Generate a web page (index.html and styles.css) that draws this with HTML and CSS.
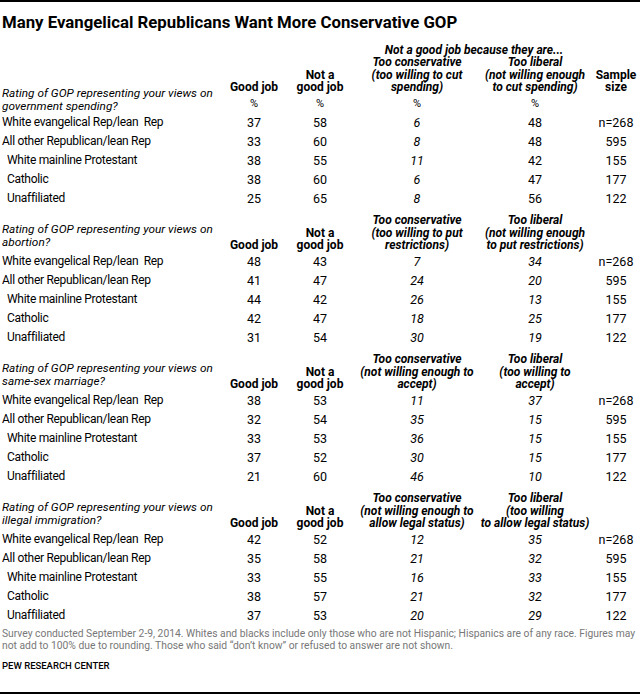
FILE: index.html
```html
<!DOCTYPE html>
<html>
<head>
<meta charset="utf-8">
<link rel="stylesheet" href="styles.css">
</head>
<body>
<div class="page">
  <h1 class="title">Many Evangelical Republicans Want More Conservative GOP</h1>

  <div class="section first">
    <div class="q">Rating of GOP representing your views on<br>government spending?</div>
    <div class="super">Not a good job because they are...</div>
    <div class="h c2">Good job</div>
    <div class="h c3">Not a<br>good job</div>
    <div class="h c4 it">Too conservative<br>(too willing to cut<br>spending)</div>
    <div class="h c5 it">Too liberal<br>(not willing enough<br>to cut spending)</div>
    <div class="h c6">Sample<br>size</div>
    <div class="pct c2">%</div><div class="pct c3">%</div><div class="pct c4">%</div><div class="pct c5">%</div>

    <div class="lab">White evangelical Rep/lean&nbsp; Rep</div><div class="n">37</div><div class="n">58</div><div class="n i">6</div><div class="n">48</div><div class="n">n=268</div>
    <div class="lab">All other Republican/lean Rep</div><div class="n">33</div><div class="n">60</div><div class="n i">8</div><div class="n">48</div><div class="n">595</div>
    <div class="lab ind">White mainline Protestant</div><div class="n">38</div><div class="n">55</div><div class="n i">11</div><div class="n">42</div><div class="n">155</div>
    <div class="lab ind">Catholic</div><div class="n">38</div><div class="n">60</div><div class="n i">6</div><div class="n">47</div><div class="n">177</div>
    <div class="lab ind">Unaffiliated</div><div class="n">25</div><div class="n">65</div><div class="n i">8</div><div class="n">56</div><div class="n">122</div>
  </div>

  <div class="section">
    <div class="q">Rating of GOP representing your views on<br>abortion?</div>
    <div class="h c2">Good job</div>
    <div class="h c3">Not a<br>good job</div>
    <div class="h c4 it">Too conservative<br>(too willing to put<br>restrictions)</div>
    <div class="h c5 it">Too liberal<br>(not willing enough<br>to put restrictions)</div>

    <div class="lab">White evangelical Rep/lean&nbsp; Rep</div><div class="n">48</div><div class="n">43</div><div class="n i">7</div><div class="n i">34</div><div class="n">n=268</div>
    <div class="lab">All other Republican/lean Rep</div><div class="n">41</div><div class="n">47</div><div class="n i">24</div><div class="n i">20</div><div class="n">595</div>
    <div class="lab ind">White mainline Protestant</div><div class="n">44</div><div class="n">42</div><div class="n i">26</div><div class="n i">13</div><div class="n">155</div>
    <div class="lab ind">Catholic</div><div class="n">42</div><div class="n">47</div><div class="n i">18</div><div class="n i">25</div><div class="n">177</div>
    <div class="lab ind">Unaffiliated</div><div class="n">31</div><div class="n">54</div><div class="n i">30</div><div class="n i">19</div><div class="n">122</div>
  </div>

  <div class="section">
    <div class="q">Rating of GOP representing your views on<br>same-sex marriage?</div>
    <div class="h c2">Good job</div>
    <div class="h c3">Not a<br>good job</div>
    <div class="h c4 it">Too conservative<br>(not willing enough to<br>accept)</div>
    <div class="h c5 it">Too liberal<br>(too willing to<br>accept)</div>

    <div class="lab">White evangelical Rep/lean&nbsp; Rep</div><div class="n">38</div><div class="n">53</div><div class="n i">11</div><div class="n i">37</div><div class="n">n=268</div>
    <div class="lab">All other Republican/lean Rep</div><div class="n">32</div><div class="n">54</div><div class="n i">35</div><div class="n i">15</div><div class="n">595</div>
    <div class="lab ind">White mainline Protestant</div><div class="n">33</div><div class="n">53</div><div class="n i">36</div><div class="n i">15</div><div class="n">155</div>
    <div class="lab ind">Catholic</div><div class="n">37</div><div class="n">52</div><div class="n i">30</div><div class="n i">15</div><div class="n">177</div>
    <div class="lab ind">Unaffiliated</div><div class="n">21</div><div class="n">60</div><div class="n i">46</div><div class="n i">10</div><div class="n">122</div>
  </div>

  <div class="section">
    <div class="q">Rating of GOP representing your views on<br>illegal immigration?</div>
    <div class="h c2">Good job</div>
    <div class="h c3">Not a<br>good job</div>
    <div class="h c4 it">Too conservative<br>(not willing enough to<br>allow legal status)</div>
    <div class="h c5 it">Too liberal<br>(too willing<br>to allow legal status)</div>

    <div class="lab">White evangelical Rep/lean&nbsp; Rep</div><div class="n">42</div><div class="n">52</div><div class="n i">12</div><div class="n i">35</div><div class="n">n=268</div>
    <div class="lab">All other Republican/lean Rep</div><div class="n">35</div><div class="n">58</div><div class="n i">21</div><div class="n i">32</div><div class="n">595</div>
    <div class="lab ind">White mainline Protestant</div><div class="n">33</div><div class="n">55</div><div class="n i">16</div><div class="n i">33</div><div class="n">155</div>
    <div class="lab ind">Catholic</div><div class="n">38</div><div class="n">57</div><div class="n i">21</div><div class="n i">32</div><div class="n">177</div>
    <div class="lab ind">Unaffiliated</div><div class="n">37</div><div class="n">53</div><div class="n i">20</div><div class="n i">29</div><div class="n">122</div>
  </div>

  <p class="note">Survey conducted September 2-9, 2014. Whites and blacks include only those who are not Hispanic; Hispanics are of any race. Figures may<br>not add to 100% due to rounding. Those who said “don’t know” or refused to answer are not shown.</p>
  <p class="source">PEW RESEARCH CENTER</p>
</div>
</body>
</html>
```

FILE: styles.css
```css
html, body {
  margin: 0;
  padding: 0;
  background: #fff;
}
.page {
  width: 640px;
  height: 694px;
  box-sizing: border-box;
  border-top: 2px solid #000;
  border-bottom: 2px solid #000;
  padding: 0 0 0 2px;
  font-family: Roboto, "Liberation Sans", sans-serif;
  color: #000;
  overflow: hidden;
}
.title {
  margin: 0;
  height: 41.5px;
  padding-top: 10px;
  box-sizing: border-box;
  font-size: 16.8px;
  line-height: 20px;
  font-weight: bold;
  white-space: nowrap;
}
.section {
  display: grid;
  grid-template-columns: 222px 60px 72px 122px 114px 48px;
  margin-top: 6.5px;
}
.section.first {
  margin-top: 0;
}
.q {
  grid-column: 1;
  grid-row: 1;
  align-self: end;
  font-style: italic;
  font-size: 11.8px;
  line-height: 12.5px;
  padding-bottom: 3.5px;
  white-space: nowrap;
}
.first .q {
  grid-row: 1 / span 3;
  line-height: 13px;
  padding-bottom: 0;
}
.super {
  grid-column: 4 / span 2;
  grid-row: 1;
  font-weight: bold;
  font-style: italic;
  font-size: 12px;
  line-height: 12.5px;
  text-align: center;
  white-space: nowrap;
}
.h {
  grid-row: 1;
  align-self: end;
  text-align: center;
  font-weight: bold;
  font-size: 12px;
  line-height: 12.5px;
  white-space: nowrap;
}
.first .h {
  grid-row: 2;
}
.h.it {
  font-style: italic;
}
.c2 { grid-column: 2; }
.c3 { grid-column: 3; }
.c4 { grid-column: 4; }
.c5 { grid-column: 5; }
.c6 { grid-column: 6; }
.pct {
  grid-row: 3;
  text-align: center;
  font-size: 11px;
  line-height: 19px;
}
.lab {
  grid-column: 1;
  font-size: 12px;
  letter-spacing: -0.3px;
  line-height: 19px;
  white-space: nowrap;
}
.lab.ind {
  padding-left: 5px;
}
.n {
  text-align: center;
  font-size: 12.5px;
  line-height: 19px;
}
.n.i {
  font-style: italic;
}
.note {
  margin: 3px 0 0 0;
  font-size: 10.3px;
  line-height: 12.5px;
  color: #777;
  white-space: nowrap;
}
.source {
  margin: 6px 0 0 0;
  font-size: 9.5px;
  line-height: 13px;
  font-weight: 500;
}
```
